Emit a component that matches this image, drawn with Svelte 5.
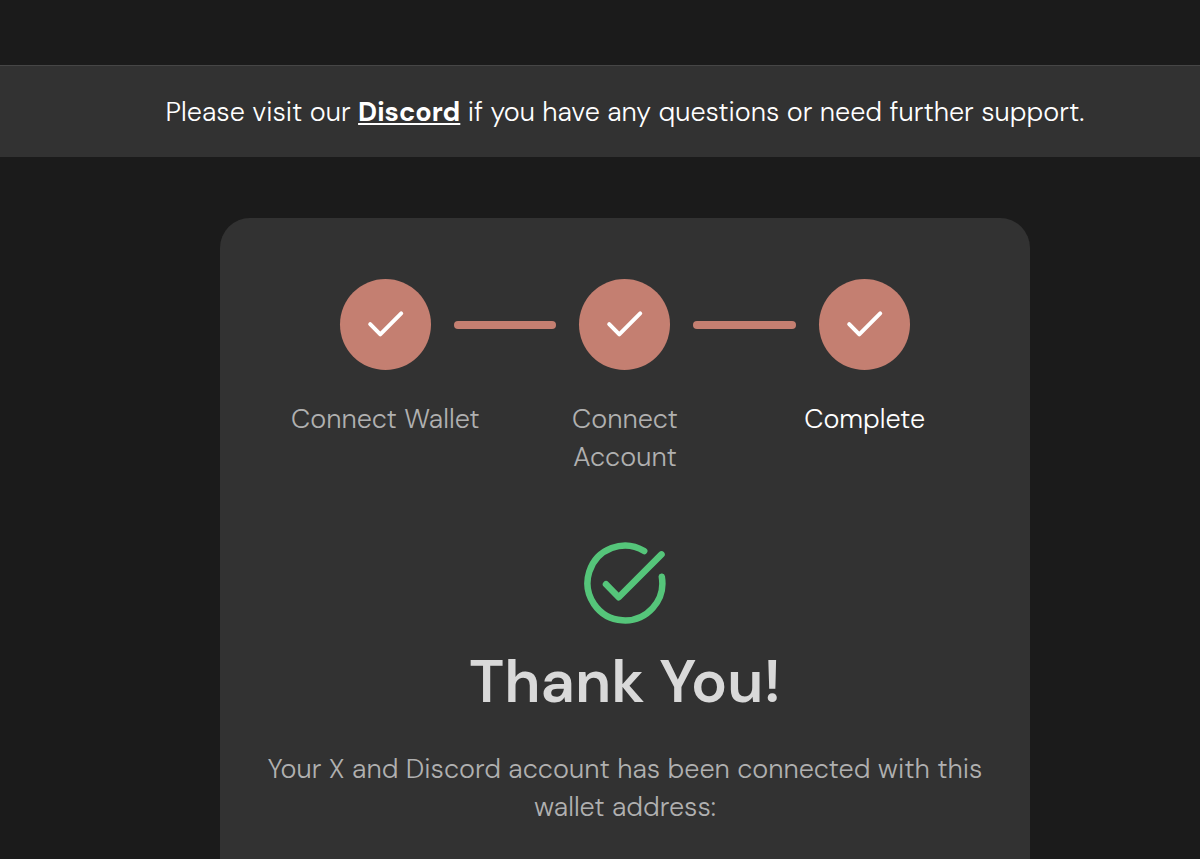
<script>
    const steps = [
        { label: "Connect Wallet", current: false },
        { label: "Connect Account", current: false },
        { label: "Complete", current: true },
    ];
</script>

<div class="page">
    <aside class="notice">
        <p>
            Please visit our <a href="#discord">Discord</a> if you have any questions or need further support.
        </p>
    </aside>

    <main class="content">
        <section class="card">
            <ol class="steps">
                {#each steps as step, i}
                    <li class="step" class:current={step.current}>
                        <div class="marker">
                            <span class="circle">
                                <svg viewBox="0 0 91 91" aria-hidden="true">
                                    <path d="M30.2 45.2L40.3 55.3L61.2 34.4" />
                                </svg>
                            </span>
                            {#if i < steps.length - 1}
                                <span class="line"></span>
                            {/if}
                        </div>
                        <span class="label">{step.label}</span>
                    </li>
                {/each}
            </ol>

            <svg class="success" viewBox="0 0 82 82" aria-hidden="true">
                <path d="M60.2 9A37.4 37.4 0 1 0 77.8 34.8" />
                <path d="M22 42.2L34.7 55.2L77.5 12.4" />
            </svg>

            <h1>Thank You!</h1>
            <p class="message">
                Your X and Discord account has been connected with this wallet address:
            </p>
        </section>
    </main>
</div>

<style>
    :global(body) {
        margin: 0;
        background: #1b1b1b;
    }

    .page {
        display: flex;
        flex-direction: column;
        min-height: 100vh;
        padding-top: 65px;
        box-sizing: border-box;
        color: #ffffff;
        font-family: "DM Sans", Inter, sans-serif;
        font-size: 27px;
        font-weight: 300;
        line-height: 38px;
    }

    .notice {
        padding: 27px 0 26px 50px;
        border-top: 1px solid #464646;
        background: #323232;
        text-align: center;
    }

    .notice p {
        margin: 0;
    }

    .notice a {
        color: inherit;
        font-weight: 700;
        text-decoration-thickness: 2px;
        text-underline-offset: 2px;
    }

    .content {
        display: flex;
        flex: 1;
        justify-content: center;
        padding: 61px 0 0 50px;
    }

    .card {
        display: flex;
        flex-direction: column;
        align-items: center;
        width: 100%;
        max-width: 810px;
        padding: 61px 45px 30px;
        border-radius: 30px 30px 0 0;
        box-sizing: border-box;
        background: #323232;
    }

    .steps {
        display: grid;
        grid-template-columns: repeat(3, 1fr);
        width: 100%;
        max-width: 719px;
        margin: 0;
        padding: 0;
        list-style: none;
    }

    .step {
        display: flex;
        flex-direction: column;
        align-items: center;
        gap: 30px;
        color: #b0b0b0;
    }

    .step.current {
        color: #ffffff;
    }

    .marker {
        display: grid;
        grid-template-columns: 1fr 91px 1fr;
        align-items: center;
        width: 100%;
    }

    .circle {
        grid-column: 2;
        height: 91px;
        border-radius: 50%;
        background: #c47f71;
    }

    .line {
        width: calc(200% - 46px);
        height: 8px;
        margin-left: 23px;
        border-radius: 4px;
        background: #c47f71;
    }

    svg {
        display: block;
        fill: none;
        stroke: #ffffff;
        stroke-width: 4;
        stroke-linecap: round;
        stroke-linejoin: round;
    }

    .label {
        max-width: 200px;
        text-align: center;
    }

    .success {
        width: 82px;
        height: 82px;
        margin-top: 66px;
        stroke: #55c57a;
        stroke-width: 6.5;
    }

    h1 {
        margin: 20px 0 0;
        color: #d9d9d9;
        font-size: 60px;
        font-weight: 600;
        line-height: 76px;
    }

    .message {
        margin: 30px 0 0;
        color: #b0b0b0;
        text-align: center;
    }
</style>
